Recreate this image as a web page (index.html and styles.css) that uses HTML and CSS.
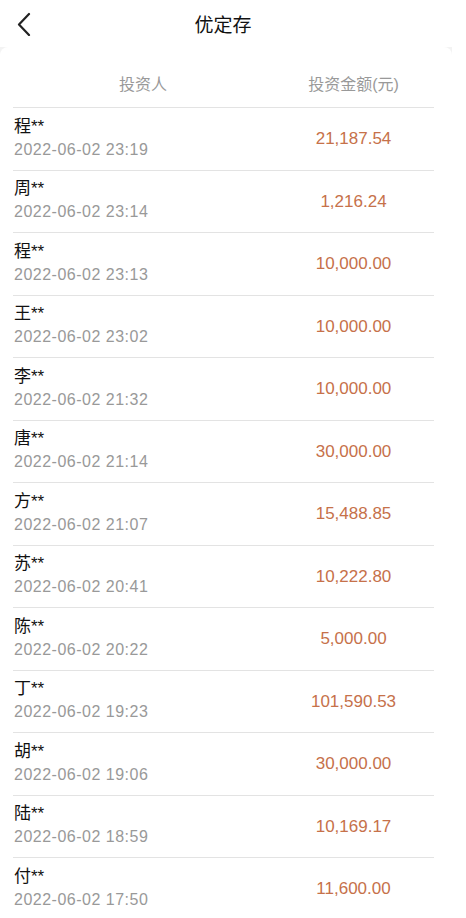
FILE: index.html
```html
<!DOCTYPE html>
<html>
<head lang="zh">
    <meta charset="UTF-8">
    <title>优定存</title>
    <link rel="stylesheet" href="styles.css">
</head>
<body>
<div id="page">
    <div class="top">
        <span class="back">
            <svg width="16" height="24" viewBox="0 0 16 24"><path d="M13 2 L3 12.5 L13 23" fill="none" stroke="#222" stroke-width="2.2" stroke-linecap="round" stroke-linejoin="round"/></svg>
        </span>
        <h1 class="title">优定存</h1>
        <span></span>
    </div>
    <div class="wrap">
        <div class="card">
            <div class="head">
                <span>投资人</span>
                <span>投资金额(元)</span>
            </div>
            <ul class="list">
                <li><div class="who"><p class="name">程**</p><p class="time">2022-06-02 23:19</p></div><span class="money">21,187.54</span></li>
                <li><div class="who"><p class="name">周**</p><p class="time">2022-06-02 23:14</p></div><span class="money">1,216.24</span></li>
                <li><div class="who"><p class="name">程**</p><p class="time">2022-06-02 23:13</p></div><span class="money">10,000.00</span></li>
                <li><div class="who"><p class="name">王**</p><p class="time">2022-06-02 23:02</p></div><span class="money">10,000.00</span></li>
                <li><div class="who"><p class="name">李**</p><p class="time">2022-06-02 21:32</p></div><span class="money">10,000.00</span></li>
                <li><div class="who"><p class="name">唐**</p><p class="time">2022-06-02 21:14</p></div><span class="money">30,000.00</span></li>
                <li><div class="who"><p class="name">方**</p><p class="time">2022-06-02 21:07</p></div><span class="money">15,488.85</span></li>
                <li><div class="who"><p class="name">苏**</p><p class="time">2022-06-02 20:41</p></div><span class="money">10,222.80</span></li>
                <li><div class="who"><p class="name">陈**</p><p class="time">2022-06-02 20:22</p></div><span class="money">5,000.00</span></li>
                <li><div class="who"><p class="name">丁**</p><p class="time">2022-06-02 19:23</p></div><span class="money">101,590.53</span></li>
                <li><div class="who"><p class="name">胡**</p><p class="time">2022-06-02 19:06</p></div><span class="money">30,000.00</span></li>
                <li><div class="who"><p class="name">陆**</p><p class="time">2022-06-02 18:59</p></div><span class="money">10,169.17</span></li>
                <li><div class="who"><p class="name">付**</p><p class="time">2022-06-02 17:50</p></div><span class="money">11,600.00</span></li>
            </ul>
        </div>
    </div>
</div>
</body>
</html>
```

FILE: styles.css
```css
*{
    padding:0;
    margin:0;
}
ul{
    list-style:none;
}
body{
    background:#fff;
    font-family:"Liberation Sans","Noto Sans CJK SC",sans-serif;
    overflow:hidden;
}
#page{
    width:452px;
}
.top{
    height:47px;
    display:grid;
    grid-template-columns:40px 1fr 40px;
    align-items:center;
    padding-right:6px;
}
.back{
    display:flex;
    padding:1px 0 0 16px;
}
.title{
    text-align:center;
    font-size:19px;
    font-weight:normal;
    color:#111;
}
.wrap{
    background:#f3f3f3;
}
.card{
    background:#fff;
    border-radius:8px 8px 0 0;
    padding:0 18px 0 13px;
}
.head{
    display:grid;
    grid-template-columns:260px 161px;
    height:61px;
    align-items:end;
    padding-bottom:12px;
    box-sizing:border-box;
    font-size:16px;
    color:#999;
    text-align:center;
    border-bottom:1px solid #e3e3e3;
    line-height:20px;
}
.list li{
    display:grid;
    grid-template-columns:260px 161px;
    align-items:center;
    height:62.5px;
    box-sizing:border-box;
    padding:7px 0 8px;
    border-bottom:1px solid #e3e3e3;
}
.name{
    font-size:17px;
    line-height:22px;
    color:#111;
    padding-left:1px;
}
.time{
    font-size:16px;
    line-height:23px;
    color:#999;
    padding-left:1px;
    letter-spacing:0.5px;
}
.money{
    text-align:center;
    font-size:17px;
    color:#c6714a;
    padding-top:2px;
}
```
